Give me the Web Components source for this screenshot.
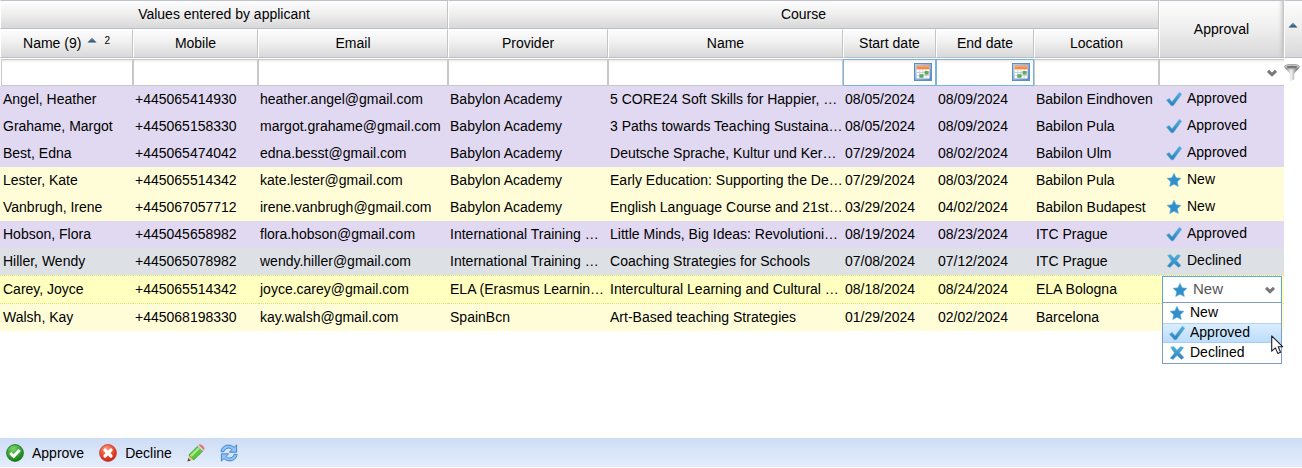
<!DOCTYPE html>
<html lang="en">
<head>
<meta charset="utf-8">
<title>Course applications</title>
<style>
html, body{
    margin: 0;
    padding: 0;
}
body{
    background: #fff;
    color: #000;
    font-family: "Liberation Sans", Arial, sans-serif;
    font-size: 14px;
}
</style>
</head>
<body>
<app-layout>
    <application-grid></application-grid>
    <tool-bar slot="footer">
        <tool-button icon="accept">Approve</tool-button>
        <tool-button icon="reject">Decline</tool-button>
        <tool-button icon="pencil" label="Edit"></tool-button>
        <tool-button icon="refresh" label="Refresh"></tool-button>
    </tool-bar>
</app-layout>

<script>
const blue = `<linearGradient id="b" x1="0" y1="0" x2="0" y2="1"><stop offset="0" stop-color="#4fb0de"/><stop offset="1" stop-color="#2f7fb8"/></linearGradient>`;

const icons = {
    approved: `<defs>${blue}</defs><path d="M.4 9 3.2 7.4 6 10.8 13.4 1.2 15.7 3.2 7.3 14.8 5.2 14.8z" fill="url(#b)" stroke="#5fb2dd" stroke-width=".5" stroke-linejoin="round"/>`,
    new: `<defs>${blue}</defs><path d="M8 1.2 10.1 5.7 15 6.3 11.4 9.7 12.3 14.6 8 12.3 3.7 14.6 4.6 9.7 1 6.3 5.9 5.7z" fill="#338fc9" stroke="#62b1db" stroke-width=".6" stroke-linejoin="round"/>`,
    declined: `<defs>${blue}</defs><path d="M1.6 2.2 4.8 1.6 8 5.2 11.6 1.6 14.6 2.6 10.6 7.8 15 12.6 12.4 14.4 8 10.5 4 14.4 1.2 13.2 5.4 8z" fill="url(#b)" stroke="#66b4dc" stroke-width=".5" stroke-linejoin="round"/>`,
    chevron: `<path d="M4 5.8 8 9.6 12 5.8" fill="none" stroke="#777" stroke-width="3"/>`,
    sort: `<defs><linearGradient id="s" x1="0" x2="0" y1="0" y2="1"><stop offset="0" stop-color="#79a3c2"/><stop offset="1" stop-color="#244a69"/></linearGradient></defs><path d="M8 5.5 12.5 10.5H3.5z" fill="url(#s)"/>`,
    filter: `<defs><linearGradient id="f"><stop offset="0" stop-color="#777"/><stop offset=".45" stop-color="#f4f4f4"/><stop offset="1" stop-color="#444"/></linearGradient></defs>
        <path d="M.3 2.5C1.6 6 6 8.6 6 10.4V17.2L10.2 15.4V10.4C10.2 8.6 14.4 6 15.7 2.5z" fill="url(#f)"/>
        <ellipse cx="8" cy="2.6" rx="7.6" ry="2.3" fill="#ccc" stroke="#8a8a8a" stroke-width=".7"/>
        <ellipse cx="8" cy="2.9" rx="5.4" ry="1.2" fill="#777"/>`,
    calendar: `<defs><linearGradient id="c" x1="0" x2="1" y1="0" y2="1"><stop offset="0" stop-color="#bcd6f3"/><stop offset="1" stop-color="#5b87bf"/></linearGradient></defs>
        <rect x=".5" y=".5" width="17" height="17" fill="url(#c)" stroke="#5f8dc6"/>
        <rect x="2.5" y="3" width="13" height="12.5" fill="#fff"/>
        <rect x="2.5" y="2.6" width="13" height="3.8" fill="#f58b48"/><rect x="2.5" y="2.6" width="13" height="1" fill="#fbb584"/>
        <path d="M2.5 9.5H15.5M2.5 12.5H15.5M5.8 6.5V15.5M9 6.5V15.5M12.2 6.5V15.5" stroke="#b7c8dd" stroke-width=".8"/>
        <rect x="5.4" y="11.2" width="4" height="3.6" fill="#62ab55"/><rect x="10.6" y="8" width="4" height="3.6" fill="#62ab55"/>`,
    accept: `<defs><radialGradient id="g" cx=".4" cy=".25" r=".8"><stop offset="0" stop-color="#7ed470"/><stop offset=".6" stop-color="#2f9f2b"/><stop offset="1" stop-color="#137015"/></radialGradient></defs>
        <circle cx="9" cy="9" r="8.4" fill="url(#g)" stroke="#14741a" stroke-width=".8"/><path d="M4.2 9 7.7 12.4 13.8 6" fill="none" stroke="#fff" stroke-width="3"/>`,
    reject: `<defs><radialGradient id="r" cx=".4" cy=".25" r=".8"><stop offset="0" stop-color="#ff9a78"/><stop offset=".6" stop-color="#e9452a"/><stop offset="1" stop-color="#c01e0d"/></radialGradient></defs>
        <circle cx="9" cy="9" r="8.4" fill="url(#r)" stroke="#c0392b" stroke-width=".8"/><path d="M6 6 12 12M12 6 6 12" fill="none" stroke="#fff" stroke-width="3.2" stroke-linecap="round"/>`,
    pencil: `<path d="M.6 17 1.8 11 6.8 16z" fill="#efc388"/><path d="M.5 17.4 1.3 14.2 3.7 16.6z" fill="#444"/>
        <path d="M1.8 11 10.6 2.2 15.6 7.2 6.8 16z" fill="#5cc63f" stroke="#2f8a24" stroke-width=".6"/><path d="M3.7 12.3 12.3 3.7" stroke="#a8ee8b" stroke-width="2"/>
        <path d="M10.6 2.2 11.8 1 16.8 6 15.6 7.2z" fill="#ddd" stroke="#999" stroke-width=".4"/><path d="M11.8 1 12.6.4C14-.4 18.2 3.6 17.5 5.2L16.8 6z" fill="#ea7468"/>`,
    refresh: `<g fill="#8ec3f4" stroke="#397fca" stroke-width=".9" stroke-linejoin="round">
        <path d="M1 7.6C1.4 3.8 4.5 1.1 8.3 1.1 10.6 1.1 12.6 2 14 3.4L16.6.9V8.2H9.4L11.9 5.6C10.9 4.6 9.7 4.1 8.4 4.1 6.3 4.1 4.6 5.4 4 7.6z"/>
        <path transform="rotate(180 9 9)" d="M1 7.6C1.4 3.8 4.5 1.1 8.3 1.1 10.6 1.1 12.6 2 14 3.4L16.6.9V8.2H9.4L11.9 5.6C10.9 4.6 9.7 4.1 8.4 4.1 6.3 4.1 4.6 5.4 4 7.6z"/></g>`,
    pointer: `<path d="M.7 .8V16.2L4.4 12.9 6.8 18.4 9.6 17.2 7.2 11.8H11.8z" fill="#fff" stroke="#1b1b2b" stroke-width="1.1" stroke-linejoin="round"/>`
};
const iconSizes = { filter: 18, calendar: 18, accept: 18, reject: 18, pencil: 18, refresh: 18, pointer: 19 };

class UiIcon extends HTMLElement {
    constructor(){
        super();
        this.attachShadow({mode:'open'});
    }
    connectedCallback(){
        const name = this.getAttribute('name');
        const size = iconSizes[name] || 16;
        this.shadowRoot.innerHTML = `
            <style>
            :host{ display: inline-block; flex: none; width: ${size}px; height: ${size}px; }
            svg{ display: block; }
            </style>
            <svg width="${size}" height="${size}" viewBox="0 0 ${size} ${size}" aria-hidden="true">${icons[name]}</svg>`;
    }
}
window.customElements.define('ui-icon', UiIcon);

class StatusLabel extends HTMLElement {
    constructor(){
        super();
        this.attachShadow({mode:'open'});
    }
    connectedCallback(){
        this.shadowRoot.innerHTML = `
            <style>
            :host{ display: flex; align-items: center; gap: 5px; line-height: 16px; }
            span{ padding-bottom: 2px; }
            </style>
            <ui-icon name="${this.getAttribute('status')}"></ui-icon>
            <span><slot></slot></span>`;
    }
}
window.customElements.define('status-label', StatusLabel);

/* Open status drop-down shown in the row that is being edited */
class StatusEditor extends HTMLElement {
    constructor(){
        super();
        this.attachShadow({mode:'open'});
        this.shadowRoot.innerHTML = `
            <style>
            *{ box-sizing: border-box; }
            :host{ display: block; position: relative; }
            .field{
                display: grid;
                align-items: center;
                height: 27px;
                background: #fff;
                border: 1px solid #5fa6dc;
                border-bottom-color: #7f9dc6;
            }
            .field > *{ grid-area: 1 / 1; }
            .field ui-icon{ z-index: 1; pointer-events: none; margin-left: 9px; }
            .field .arrow{ justify-self: end; margin-right: 3px; }
            select{
                appearance: none;
                width: 100%;
                height: 25px;
                padding: 0 20px 2px 30px;
                border: 0;
                outline: 0;
                background: none;
                color: #555;
                font: 15px "Liberation Sans", Arial, sans-serif;
            }
            ul{
                position: absolute;
                z-index: 2;
                top: 100%;
                left: 0;
                right: 0;
                margin: 0;
                padding: 0;
                list-style: none;
                background: #fff;
                border: 1px solid #7f9dc6;
                border-top: 0;
            }
            li{
                height: 20px;
                padding: 1px 0 0 6px;
            }
            li[aria-selected=true]{
                background: linear-gradient(#dceefe, #b9dcfb);
                box-shadow: inset 0 1px #b3d3f2, inset 0 -1px #a9cdf0;
            }
            .pointer{ position: absolute; z-index: 3; top: 59px; right: -1px; width: 12px; }
            </style>
            <div class="field">
                <ui-icon name="new"></ui-icon>
                <select aria-label="Approval">
                    <option>New</option>
                    <option>Approved</option>
                    <option>Declined</option>
                </select>
                <ui-icon class="arrow" name="chevron"></ui-icon>
            </div>
            <ul role="listbox" aria-label="Approval options">
                <li role="option"><status-label status="new">New</status-label></li>
                <li role="option" aria-selected="true"><status-label status="approved">Approved</status-label></li>
                <li role="option"><status-label status="declined">Declined</status-label></li>
            </ul>
            <ui-icon class="pointer" name="pointer"></ui-icon>`;
    }
}
window.customElements.define('status-editor', StatusEditor);

class FilterField extends HTMLElement {
    constructor(){
        super();
        this.attachShadow({mode:'open'});
    }
    connectedCallback(){
        const type = this.getAttribute('type') || 'text';
        const label = this.getAttribute('label');
        let control = `<input type="text" aria-label="${label}">`;
        if (type === 'date') {
            control += `<button type="button" aria-label="Pick ${label}"><ui-icon name="calendar"></ui-icon></button>`;
        }
        if (type === 'select') {
            control = `<select aria-label="${label}"><option></option><option>New</option><option>Approved</option><option>Declined</option></select>
                <ui-icon name="chevron"></ui-icon>`;
        }
        this.shadowRoot.innerHTML = `
            <style>
            *{ box-sizing: border-box; }
            :host{
                box-sizing: border-box;
                display: flex;
                align-items: center;
                height: 27px;
                border: 1px solid #c8c8c8;
                background: linear-gradient(#ececec, #fff 3px);
            }
            :host([type=date]){ border-color: #76b4e2; padding: 0 3px 2px 0; }
            :host([type=select]){ border-right: 0; padding-right: 4px; }
            input, select{
                appearance: none;
                flex: 1;
                min-width: 0;
                height: 100%;
                padding: 0 2px;
                border: 0;
                outline: 0;
                background: none;
                font: inherit;
            }
            button{ display: flex; padding: 0; border: 0; background: none; }
            </style>
            ${control}`;
    }
}
window.customElements.define('filter-field', FilterField);

const applications = [
    ['Angel, Heather', '+445065414930', 'heather.angel@gmail.com', 'Babylon Academy', '5 CORE24 Soft Skills for Happier, …', '08/05/2024', '08/09/2024', 'Babilon Eindhoven', 'Approved'],
    ['Grahame, Margot', '+445065158330', 'margot.grahame@gmail.com', 'Babylon Academy', '3 Paths towards Teaching Sustaina…', '08/05/2024', '08/09/2024', 'Babilon Pula', 'Approved'],
    ['Best, Edna', '+445065474042', 'edna.besst@gmail.com', 'Babylon Academy', 'Deutsche Sprache, Kultur und Ker…', '07/29/2024', '08/02/2024', 'Babilon Ulm', 'Approved'],
    ['Lester, Kate', '+445065514342', 'kate.lester@gmail.com', 'Babylon Academy', 'Early Education: Supporting the De…', '07/29/2024', '08/03/2024', 'Babilon Pula', 'New'],
    ['Vanbrugh, Irene', '+445067057712', 'irene.vanbrugh@gmail.com', 'Babylon Academy', 'English Language Course and 21st…', '03/29/2024', '04/02/2024', 'Babilon Budapest', 'New'],
    ['Hobson, Flora', '+445045658982', 'flora.hobson@gmail.com', 'International Training …', 'Little Minds, Big Ideas: Revolutioni…', '08/19/2024', '08/23/2024', 'ITC Prague', 'Approved'],
    ['Hiller, Wendy', '+445065078982', 'wendy.hiller@gmail.com', 'International Training …', 'Coaching Strategies for Schools', '07/08/2024', '07/12/2024', 'ITC Prague', 'Declined'],
    ['Carey, Joyce', '+445065514342', 'joyce.carey@gmail.com', 'ELA (Erasmus Learnin…', 'Intercultural Learning and Cultural …', '08/18/2024', '08/24/2024', 'ELA Bologna', 'edit'],
    ['Walsh, Kay', '+445068198330', 'kay.walsh@gmail.com', 'SpainBcn', 'Art-Based teaching Strategies', '01/29/2024', '02/02/2024', 'Barcelona', 'New']
];

class ApplicationGrid extends HTMLElement {
    constructor(){
        super();
        this.attachShadow({mode:'open'});
        this.shadowRoot.innerHTML = `
            <style>
            *{ box-sizing: border-box; }
            :host{ display: block; }
            table{
                width: 100%;
                table-layout: fixed;
                border-collapse: separate;
                border-spacing: 0;
            }
            th{
                height: 29px;
                padding: 0 0 2px;
                font-weight: normal;
                text-align: center;
                background: linear-gradient(#fdfdfd, #f0f0f0 45%, #d8d8d8);
                border: 1px solid #fff;
                border-right-color: #c4c4c4;
                border-bottom-color: #b6bdcb;
            }
            tr:first-child th{ border-top-color: #bfc2ca; }
            th.approval{ padding: 0; box-shadow: inset -4px 0 4px -3px #bbb; }
            th.tools{ border-right: 0; padding-bottom: 8px; }
            th.tools ui-icon{ display: block; }
            .sorted{ display: flex; justify-content: center; align-items: center; }
            .sorted ui-icon{ margin: 0 4px 5px 3px; }
            .sorted small{ font-size: 10px; margin-bottom: 5px; }
            .filters td{ height: 28px; padding: 1px 0 0; }
            .filters td:first-child{ padding-left: 1px; }
            .filters td > ui-icon{ display: block; }
            tbody td{
                height: 27px;
                padding: 0 0 2px 2px;
                white-space: nowrap;
                overflow: hidden;
                background: var(--row);
            }
            tbody td:first-child{ padding-left: 3px; }
            tbody td.status{ padding: 0 0 2px 7px; overflow: visible; }
            tbody td.tools{ background: none; padding: 0; border: 0; }
            .Approved{ --row: #e1d9f1; }
            .New{ --row: #fffdd8; }
            .Declined{ --row: #dde1e6; }
            .edit{ --row: #ffffc0; }
            .edit td{
                height: 29px;
                border: 1px dotted #d5e77c;
                border-width: 1px 0;
            }
            .edit td.status{ padding: 0 2px 0 3px; }
            </style>
            <table>
                <colgroup>
                    <col style="width: 133px">
                    <col style="width: 125px">
                    <col style="width: 190px">
                    <col style="width: 160px">
                    <col>
                    <col style="width: 93px">
                    <col style="width: 98px">
                    <col style="width: 125px">
                    <col style="width: 125px">
                    <col style="width: 18px">
                </colgroup>
                <thead>
                    <tr>
                        <th colspan="3">Values entered by applicant</th>
                        <th colspan="5">Course</th>
                        <th rowspan="2" class="approval">Approval</th>
                        <th rowspan="2" class="tools"><ui-icon name="sort"></ui-icon></th>
                    </tr>
                    <tr>
                        <th><div class="sorted">Name (9)<ui-icon name="sort"></ui-icon><small>2</small></div></th>
                        <th>Mobile</th>
                        <th>Email</th>
                        <th>Provider</th>
                        <th>Name</th>
                        <th>Start date</th>
                        <th>End date</th>
                        <th>Location</th>
                    </tr>
                    <tr class="filters">
                        <td><filter-field label="Name"></filter-field></td>
                        <td><filter-field label="Mobile"></filter-field></td>
                        <td><filter-field label="Email"></filter-field></td>
                        <td><filter-field label="Provider"></filter-field></td>
                        <td><filter-field label="Course name"></filter-field></td>
                        <td><filter-field type="date" label="Start date"></filter-field></td>
                        <td><filter-field type="date" label="End date"></filter-field></td>
                        <td><filter-field label="Location"></filter-field></td>
                        <td><filter-field type="select" label="Approval"></filter-field></td>
                        <td><ui-icon name="filter"></ui-icon></td>
                    </tr>
                </thead>
                <tbody></tbody>
            </table>`;
        this.shadowRoot.querySelector('tbody').innerHTML = applications.map((row) => this.renderRow(row)).join('');
    }
    renderRow(row){
        const values = row.slice(0, 8);
        const status = row[8];
        const editor = status === 'edit'
            ? '<status-editor></status-editor>'
            : `<status-label status="${status.toLowerCase()}">${status}</status-label>`;
        // the open list covers the status of the last row
        const last = row === applications[applications.length - 1];
        return `<tr class="${status}">${values.map((value) => `<td>${value}</td>`).join('')}<td class="status">${last ? '' : editor}</td><td class="tools"></td></tr>`;
    }
}
window.customElements.define('application-grid', ApplicationGrid);

class ToolButton extends HTMLElement {
    constructor(){
        super();
        this.attachShadow({mode:'open'});
    }
    connectedCallback(){
        const label = this.getAttribute('label');
        this.shadowRoot.innerHTML = `
            <style>
            :host{ display: block; }
            button{
                display: flex;
                align-items: center;
                gap: 8px;
                padding: 0;
                border: 0;
                background: none;
                color: inherit;
                font: inherit;
            }
            </style>
            <button type="button" ${label ? `aria-label="${label}"` : ''}>
                <ui-icon name="${this.getAttribute('icon')}"></ui-icon>
                ${label ? '' : '<span><slot></slot></span>'}
            </button>`;
    }
}
window.customElements.define('tool-button', ToolButton);

class ToolBar extends HTMLElement {
    constructor(){
        super();
        this.attachShadow({mode:'open'});
        this.shadowRoot.innerHTML = `
            <style>
            :host{
                display: flex;
                align-items: center;
                gap: 15px;
                height: 29px;
                padding-left: 6px;
                margin-bottom: 1px;
                background: linear-gradient(#cddcf5, #e4edfc);
            }
            </style>
            <slot></slot>`;
    }
}
window.customElements.define('tool-bar', ToolBar);

class AppLayout extends HTMLElement {
    constructor(){
        super();
        this.attachShadow({mode:'open'});
        this.shadowRoot.innerHTML = `
            <style>
            :host{ display: flex; flex-direction: column; min-height: 100vh; }
            main{ flex: 1; }
            </style>
            <main><slot></slot></main>
            <footer><slot name="footer"></slot></footer>`;
    }
}
window.customElements.define('app-layout', AppLayout);
</script>
</body>
</html>
